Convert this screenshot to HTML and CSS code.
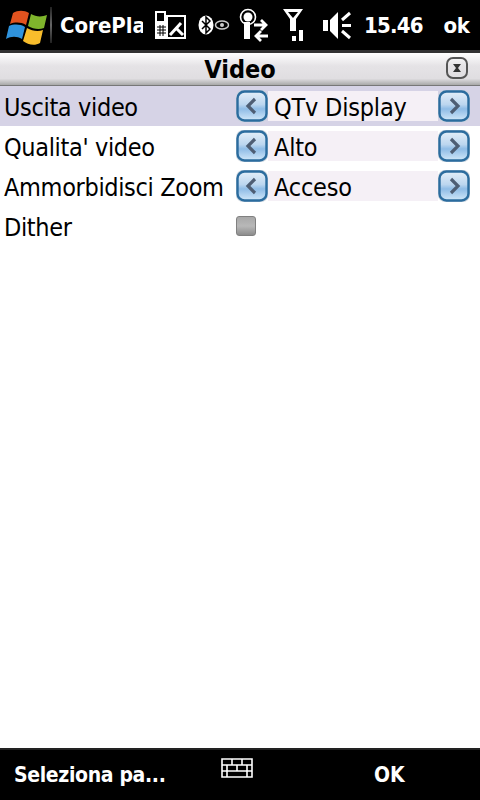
FILE: index.html
```html
<!DOCTYPE html>
<html lang="it">
<head>
    <meta charset="UTF-8">
    <meta name="viewport" content="width=device-width, initial-scale=1.0">
    <title>Video</title>
    <link rel="stylesheet" href="styles.css">
</head>
<body>
    <svg class="defs" width="0" height="0">
        <defs>
            <linearGradient id="btn-fill" x1="0" y1="0" x2="0" y2="1">
                <stop offset="0" stop-color="#e4eff9"/>
                <stop offset="0.45" stop-color="#bcd6ef"/>
                <stop offset="0.6" stop-color="#8fbce6"/>
                <stop offset="1" stop-color="#d2e8f9"/>
            </linearGradient>
            <symbol id="btn-left" viewBox="0 0 32 32">
                <rect x="0" y="0" width="32" height="32" rx="7" fill="#c9d3dd"/>
                <rect x="1.500" y="1.500" width="29" height="29" rx="7" fill="url(#btn-fill)" stroke="#2b6c9e" stroke-width="2.400"/>
                <path d="M19 9 L12 16 L19 23" fill="none" stroke="#4e5e74" stroke-width="3.200"/>
            </symbol>
            <symbol id="btn-right" viewBox="0 0 32 32">
                <rect x="0" y="0" width="32" height="32" rx="7" fill="#c9d3dd"/>
                <rect x="1.500" y="1.500" width="29" height="29" rx="7" fill="url(#btn-fill)" stroke="#2b6c9e" stroke-width="2.400"/>
                <path d="M13 9 L20 16 L13 23" fill="none" stroke="#4e5e74" stroke-width="3.200"/>
            </symbol>
        </defs>
    </svg>

    <div class="page">
        <header class="topbar">
            <svg class="start-logo" width="46" height="44" viewBox="0 0 46 44">
                <path d="M11 10 C16 7 22 7 27 10 L24 22 C19 19 13 19 8 21 Z" fill="#e2531f"/>
                <path d="M29 11 C34 14 40 14 45 12 L42 25 C37 27 31 26 26 23 Z" fill="#7fb52c"/>
                <path d="M7 23 C12 21 18 21 23 24 L20 36 C15 33 9 33 4 36 Z" fill="#2f93dd"/>
                <path d="M25 25 C30 28 36 29 41 27 L38 40 C33 43 26 42 21 38 Z" fill="#f8bd2c"/>
            </svg>
            <div class="divider"></div>
            <div class="app-name">CorePlay</div>
            <div class="tray">
                <svg class="tray-phone" width="33" height="28" viewBox="0 0 33 28">
                    <path d="M1 0 H12 V4 H32 V28 H1 Z" fill="#fff"/>
                    <rect x="14" y="6" width="16" height="20" fill="#000"/>
                    <rect x="3" y="2" width="7" height="8" fill="#000"/>
                    <path d="M3 16 H12 M3 19 H12 M3 22 H12 M6 14 V25 M9 14 V25" stroke="#000"/>
                    <path d="M16 24 L27 12 M23 18 L29 24" stroke="#fff" stroke-width="3" fill="none"/>
                </svg>
                <svg class="tray-bt" width="34" height="20" viewBox="0 0 34 20">
                    <ellipse cx="8" cy="10" rx="7.500" ry="9.500" fill="#fff"/>
                    <path d="M4 6 L12 14 L8 18 V2 L12 6 L4 14" fill="none" stroke="#000" stroke-width="1.500"/>
                    <ellipse cx="24" cy="10" rx="6.500" ry="4" fill="none" stroke="#ccc" stroke-width="1.500"/>
                    <circle cx="24" cy="10" r="2" fill="#ccc"/>
                </svg>
                <svg class="tray-data" width="32" height="34" viewBox="0 0 32 34">
                    <circle cx="9" cy="9" r="7.500" fill="none" stroke="#fff" stroke-width="1.600"/>
                    <circle cx="9" cy="9" r="4.500" fill="#fff"/>
                    <rect x="5" y="14" width="6" height="17" fill="#fff"/>
                    <path d="M15 17 H26 M22 12 L27 17 L22 22" fill="none" stroke="#fff" stroke-width="2.800"/>
                    <path d="M29 28 H18 M22 23 L17 28 L22 33" fill="none" stroke="#fff" stroke-width="2.800"/>
                </svg>
                <svg class="tray-signal" width="22" height="34" viewBox="0 0 22 34">
                    <path d="M1 1 H21 L14 11 V23 H8 V11 Z M6 4 L11 10 L16 4 Z" fill="#fff" fill-rule="evenodd"/>
                    <rect x="10" y="28" width="4" height="5" fill="#fff"/>
                    <rect x="17" y="22" width="4" height="11" fill="#fff"/>
                </svg>
                <svg class="tray-volume" width="29" height="29" viewBox="0 0 29 29">
                    <path d="M0 9 H5 V20 H0 Z M7 9 L15 1 V28 L7 20 Z" fill="#fff"/>
                    <path d="M19 9 L27 2 M19 14.500 H28 M19 20 L27 27" stroke="#fff" stroke-width="3" fill="none"/>
                </svg>
                <span class="clock">15.46</span>
                <span class="tray-ok">ok</span>
            </div>
        </header>

        <div class="titlebar">
            <h1>Video</h1>
            <svg class="close-icon" width="24" height="24" viewBox="0 0 24 24">
                <rect x="2" y="2" width="20" height="20" rx="6" fill="none" stroke="#555" stroke-width="2"/>
                <path d="M8 8 H16 L13 12 L16 16 H8 L11 12 Z" fill="#333"/>
            </svg>
        </div>

        <main class="settings">
            <div class="row row-selected">
                <div class="row-label">Uscita video</div>
                <div class="spinner">
                    <svg class="spin-btn"><use href="#btn-left"/></svg>
                    <div class="spin-value">QTv Display</div>
                    <svg class="spin-btn"><use href="#btn-right"/></svg>
                </div>
            </div>
            <div class="row">
                <div class="row-label">Qualita' video</div>
                <div class="spinner">
                    <svg class="spin-btn"><use href="#btn-left"/></svg>
                    <div class="spin-value">Alto</div>
                    <svg class="spin-btn"><use href="#btn-right"/></svg>
                </div>
            </div>
            <div class="row">
                <div class="row-label">Ammorbidisci Zoom</div>
                <div class="spinner">
                    <svg class="spin-btn"><use href="#btn-left"/></svg>
                    <div class="spin-value">Acceso</div>
                    <svg class="spin-btn"><use href="#btn-right"/></svg>
                </div>
            </div>
            <div class="row">
                <div class="row-label">Dither</div>
                <div class="spinner">
                    <div class="checkbox"></div>
                </div>
            </div>
        </main>

        <footer class="softkeys">
            <div class="softkey softkey-left">Seleziona pa...</div>
            <svg class="keyboard-icon" width="32" height="20" viewBox="0 0 32 20">
                <path d="M1 1 H31 V19 H1 Z M1 7 H31 M1 13 H31 M11 1 V7 M21 1 V7 M6 7 V13 M16 7 V13 M26 7 V13 M6 13 V19 M26 13 V19" fill="none" stroke="#fff" stroke-width="1.600"/>
            </svg>
            <div class="softkey softkey-right">OK</div>
        </footer>
    </div>
</body>
</html>
```

FILE: styles.css
```css
body {
    margin: 0;
    background: #fff;
    font-family: "DejaVu Sans Condensed", "DejaVu Sans", sans-serif;
    color: #000;
}
.defs {
    position: absolute;
}
.page {
    width: 480px;
    height: 800px;
    display: flex;
    flex-direction: column;
    overflow: hidden;
}
.topbar {
    height: 50px;
    background: #000;
    color: #fff;
    display: flex;
    align-items: center;
    flex-shrink: 0;
}
.start-logo {
    margin-left: 2px;
    flex-shrink: 0;
}
.divider {
    width: 2px;
    height: 36px;
    margin-left: 2px;
    background: linear-gradient(#222, #666 50%, #222);
    flex-shrink: 0;
}
.app-name {
    width: 83px;
    margin-left: 8px;
    font-size: 22px;
    font-weight: bold;
    white-space: nowrap;
    overflow: hidden;
    flex-shrink: 0;
}
.tray {
    display: flex;
    align-items: center;
    flex: 1;
}
.tray-phone {
    margin-left: 11px;
}
.tray-bt {
    margin-left: 11px;
}
.tray-data {
    margin-left: 7px;
}
.tray-signal {
    margin-left: 11px;
}
.tray-volume {
    margin-left: 19px;
}
.clock {
    margin-left: 12px;
    font-size: 22px;
    font-weight: bold;
    letter-spacing: -0.8px;
}
.tray-ok {
    margin-left: 21px;
    font-size: 22px;
    font-weight: bold;
    letter-spacing: -0.5px;
}
.titlebar {
    height: 32px;
    border-top: 3px solid #333;
    border-bottom: 1px solid #777;
    background: linear-gradient(#fff, #e5e3e6 40%, #e0dee1 80%, #a8a8a8);
    display: flex;
    align-items: center;
    justify-content: center;
    position: relative;
    flex-shrink: 0;
}
.titlebar h1 {
    margin: 0;
    font-size: 25px;
    font-weight: bold;
}
.close-icon {
    position: absolute;
    right: 11px;
    top: 3px;
}
.settings {
    flex: 1;
    background: #fff;
}
.row {
    height: 40px;
    display: flex;
    align-items: center;
    justify-content: space-between;
}
.row-selected {
    background: #d6d3e6;
}
.row-label {
    padding-left: 4px;
    padding-top: 3px;
    font-size: 25px;
    letter-spacing: -0.35px;
    white-space: nowrap;
}
.spinner {
    width: 234px;
    margin-right: 10px;
    display: flex;
    align-items: center;
    flex-shrink: 0;
}
.spin-btn {
    width: 32px;
    height: 32px;
    flex-shrink: 0;
}
.spin-value {
    flex: 1;
    height: 30px;
    line-height: 33px;
    padding-left: 6px;
    background: #f5f0f6;
    font-size: 25px;
    letter-spacing: -0.2px;
}
.checkbox {
    width: 18px;
    height: 18px;
    border: 1px solid #808080;
    border-radius: 3px;
    background: linear-gradient(#a8a8a8, #b8b8b8 50%, #8c8c8c);
}
.softkeys {
    height: 50px;
    border-top: 2px solid #222;
    background: #000;
    color: #fff;
    display: flex;
    align-items: center;
    position: relative;
    flex-shrink: 0;
}
.softkey {
    font-size: 21px;
    font-weight: bold;
}
.softkey-left {
    margin-left: 14px;
    letter-spacing: -0.35px;
}
.softkey-right {
    position: absolute;
    left: 374px;
}
.keyboard-icon {
    position: absolute;
    left: 221px;
    top: 8px;
}
```
